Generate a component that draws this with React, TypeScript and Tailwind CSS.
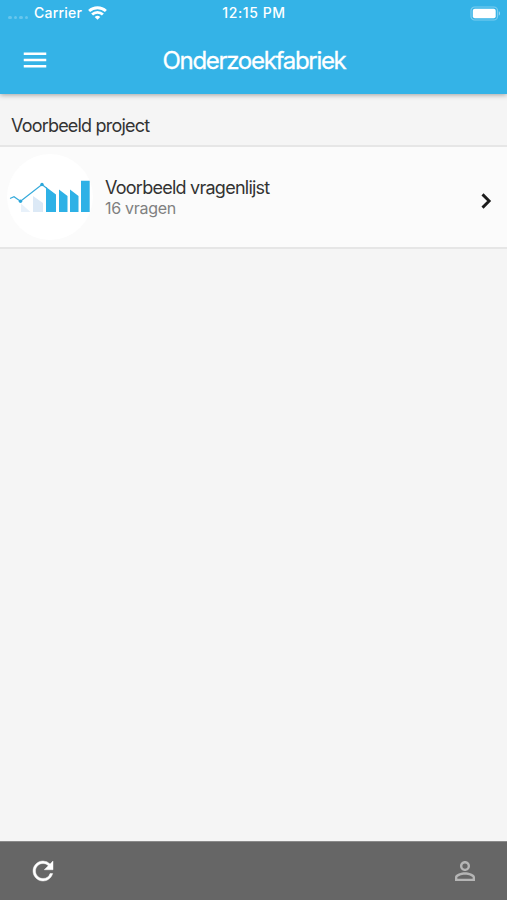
import { MdMenu, MdPersonOutline } from 'react-icons/md'

interface Survey {
  id: string
  title: string
  questionCount: number
}

interface Project {
  id: string
  name: string
  surveys: Survey[]
}

const projects: Project[] = [
  {
    id: 'voorbeeld',
    name: 'Voorbeeld project',
    surveys: [{ id: 'voorbeeld-vragenlijst', title: 'Voorbeeld vragenlijst', questionCount: 16 }],
  },
]

function WifiIcon() {
  return (
    <svg className="ml-[6px] h-[14px] w-[19px]" viewBox="0 0 19 14" fill="none" stroke="currentColor" strokeWidth="2.8">
      <path d="M1.1 5.1a12.2 12.2 0 0 1 16.8 0" />
      <path d="M4.1 8.6a7.9 7.9 0 0 1 10.8 0" />
      <path d="M9.5 13.8 6.7 11a4 4 0 0 1 5.6 0z" fill="currentColor" stroke="none" />
    </svg>
  )
}

function BatteryIcon() {
  return (
    <svg className="h-[15px] w-[31px]" viewBox="0 0 31 15">
      <rect x="1" y="1" width="26.5" height="13" rx="3.6" fill="none" stroke="#fff" strokeOpacity="0.35" strokeWidth="1.2" />
      <rect x="2.8" y="2.8" width="22.9" height="9.4" rx="2" fill="#fff" />
      <path d="M28.8 5.3c1.6.6 1.6 3.8 0 4.4z" fill="#fff" fillOpacity="0.5" />
    </svg>
  )
}

function ChevronIcon() {
  return (
    <svg className="mt-2 size-[30px] text-[#1c1c1c]" viewBox="0 0 24 24" fill="none" stroke="currentColor" strokeWidth="2.3">
      <path d="m9.2 6.7 5.3 5.3-5.3 5.3" />
    </svg>
  )
}

// Heavier take on the Material refresh glyph
function RefreshIcon() {
  return (
    <svg className="size-[30px]" viewBox="0 0 24 24" fill="currentColor" stroke="currentColor" strokeWidth="0.35">
      <path d="M17.65 6.35A7.958 7.958 0 0 0 12 4c-4.42 0-7.99 3.58-7.99 8s3.57 8 7.99 8c3.73 0 6.84-2.55 7.73-6h-2.08A5.99 5.99 0 0 1 12 18c-3.31 0-6-2.69-6-6s2.69-6 6-6c1.66 0 3.14.69 4.22 1.78L13 11h7V4z" />
    </svg>
  )
}

function StatusBar() {
  return (
    <div className="grid h-[26px] grid-cols-3 items-center text-[14px] font-medium leading-none">
      <div className="flex items-center">
        <div className="ml-2 mt-[9px] flex gap-[2px]">
          {[0, 1, 2, 3].map(dot => (
            <span key={dot} className="size-[3.5px] rounded-full bg-white/25" />
          ))}
        </div>
        <span className="ml-[6px] tracking-[0.22px]">Carrier</span>
        <WifiIcon />
      </div>
      <span className="pl-px text-center tracking-[0.6px]">12:15 PM</span>
      <div className="flex justify-end pr-[6px]">
        <BatteryIcon />
      </div>
    </div>
  )
}

function Header() {
  return (
    <header className="z-10 h-[94px] bg-[#34b3e7] text-white shadow-[0_1px_5px_rgba(0,0,0,0.35)]">
      <StatusBar />
      <div className="grid h-[68px] grid-cols-[70px_1fr_70px] items-center">
        <button className="flex justify-center">
          <MdMenu className="size-[30px]" />
        </button>
        <h1 className="pl-px pt-px text-center text-[24px] leading-[30px] tracking-[-1.3px] [-webkit-text-stroke:0.3px_white]">
          Onderzoekfabriek
        </h1>
      </div>
    </header>
  )
}

function SurveyLogo() {
  return (
    <div className="size-[86px] rounded-full bg-white">
      <svg className="size-[86px]" viewBox="7 154 86 86">
        <path d="M21 203.5 30.5 212H21z" fill="#e8f1fa" />
        <path d="M33 196l10 7v9H33z" fill="#dce9f6" />
        <path
          d="M46 187l10 7.5V212H46zM59 189.5l8.5 6.5v16H59zM70 189.5l8.5 6.5v16H70zM81 180.7h8.7V212H81z"
          fill="#2eb1e6"
        />
        <path d="M10 198.5 14 196.8 20.5 201.2 42 184.5 47 188.5" fill="none" stroke="#35aadb" strokeWidth="1.2" />
        <circle cx="20.5" cy="201.3" r="1.7" fill="#2ba6da" />
        <circle cx="42" cy="184.5" r="1.7" fill="#2ba6da" />
      </svg>
    </div>
  )
}

function SurveyRow({ survey }: { survey: Survey }) {
  return (
    <button className="flex h-[104px] w-full items-center border-y-2 border-[#e6e6e6] bg-[#fbfbfb] pl-[7px] pr-[6px] text-left">
      <SurveyLogo />
      <div className="ml-3 flex-1 pt-0.5">
        <div className="text-[18px] leading-5 tracking-[-0.75px] text-[#333]">{survey.title}</div>
        <div className="text-[16px] leading-5 tracking-[-0.28px] text-[#808080]">{survey.questionCount} vragen</div>
      </div>
      <ChevronIcon />
    </button>
  )
}

export default function App() {
  return (
    <div className="flex h-screen flex-col bg-[#f5f5f5] font-['Inter','Liberation_Sans',sans-serif]">
      <Header />
      <main className="flex-1">
        {projects.map(project => (
          <section key={project.id}>
            <h2 className="flex h-[51px] items-end pb-[7px] pl-[11px] text-[18px] leading-6 tracking-[-0.8px] text-[#333]">
              {project.name}
            </h2>
            {project.surveys.map(survey => (
              <SurveyRow key={survey.id} survey={survey} />
            ))}
          </section>
        ))}
      </main>
      <footer className="flex h-[59px] items-center justify-between border-t border-[#8a8a8a] bg-[#666] pl-7 pr-[27px]">
        <button className="text-white">
          <RefreshIcon />
        </button>
        <button>
          <MdPersonOutline className="size-[30px] text-[#b5b5b5]" />
        </button>
      </footer>
    </div>
  )
}
